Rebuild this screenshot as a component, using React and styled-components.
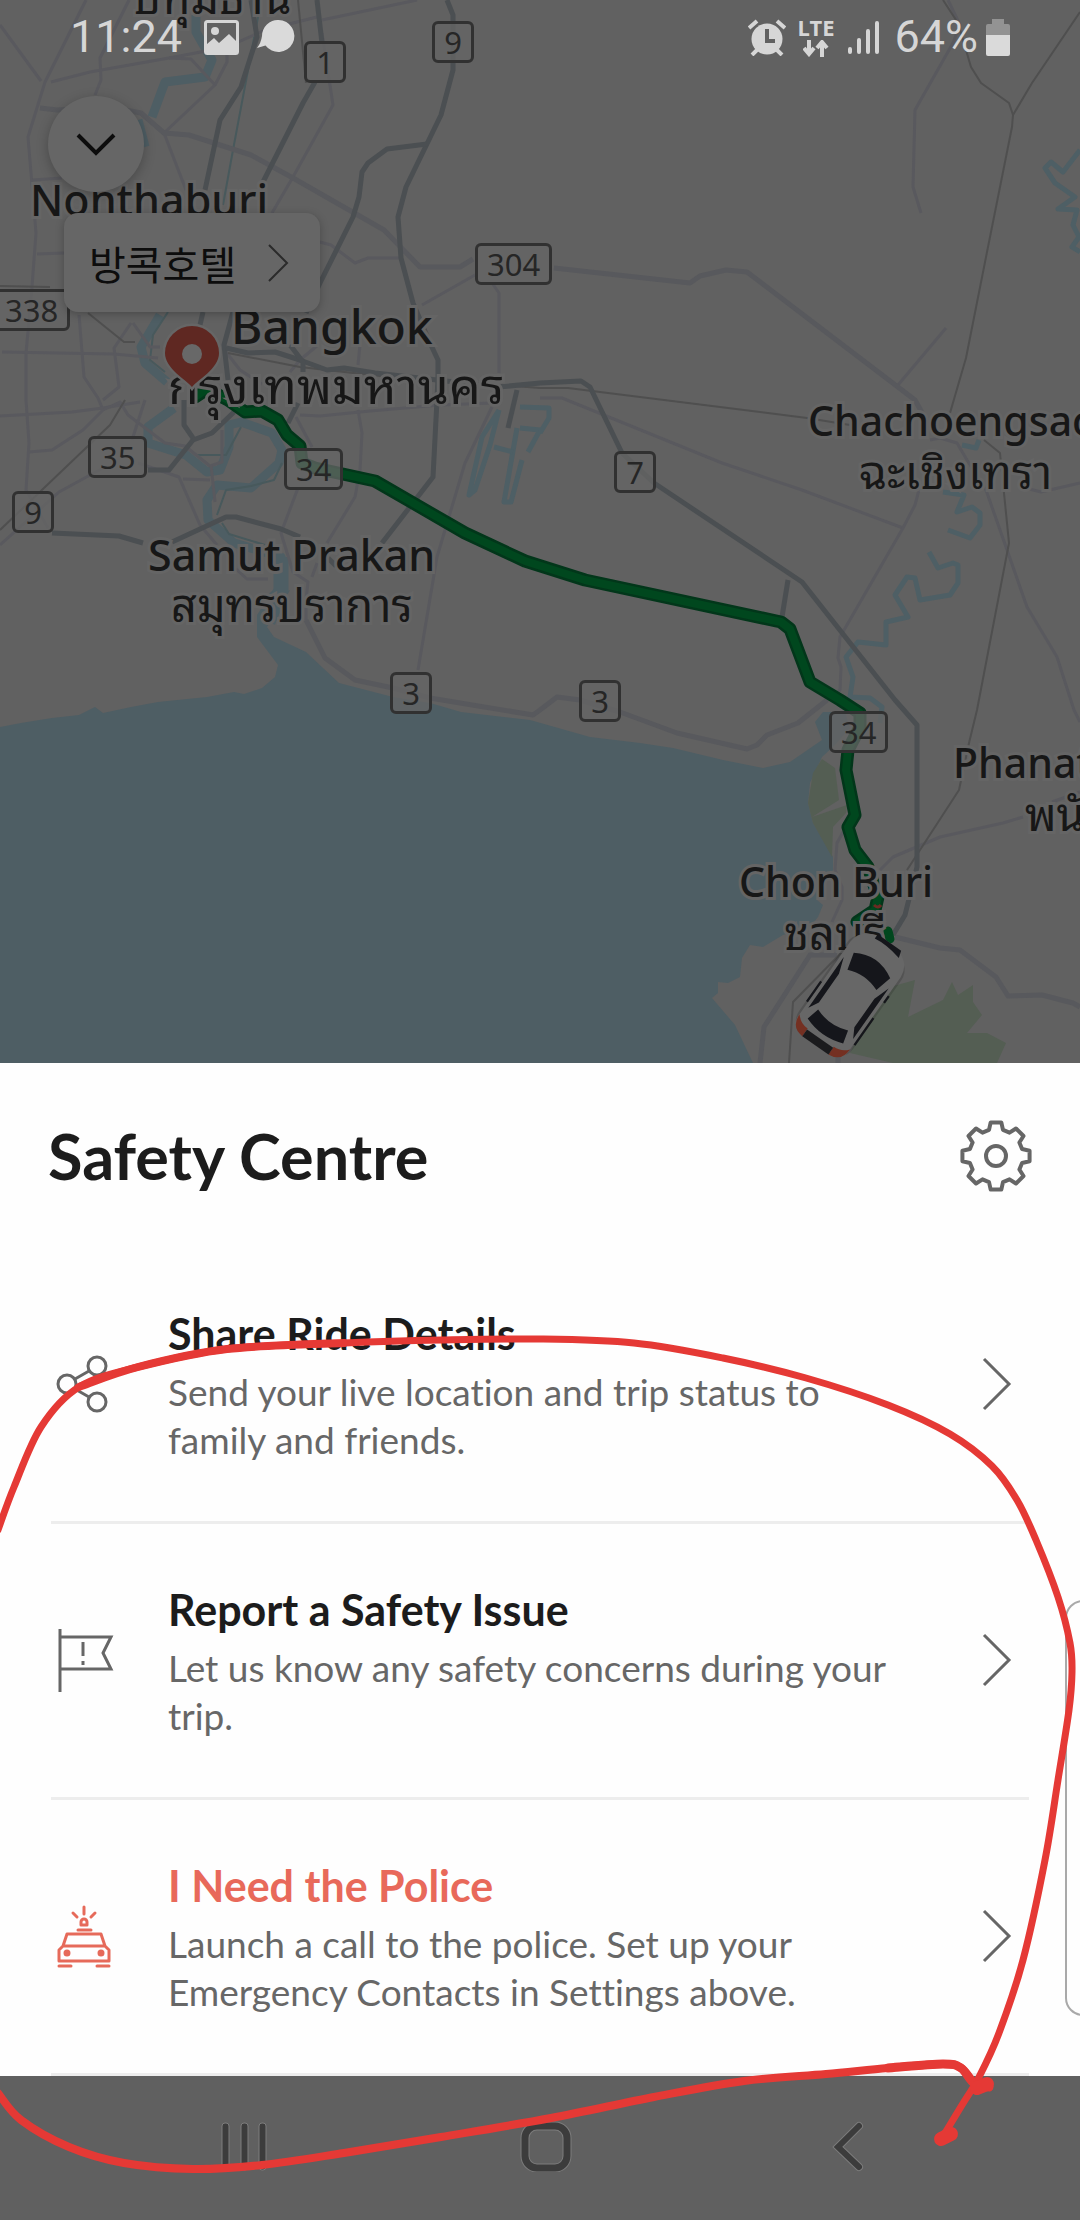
import React from "react";
import styled, { createGlobalStyle } from "styled-components";

const GlobalStyle = createGlobalStyle`
  * { box-sizing: border-box; }
  body { margin: 0; background: #606060; }
  button { border: 0; padding: 0; margin: 0; background: none; font: inherit; color: inherit; text-align: left; cursor: pointer; }
  svg { display: block; flex: none; }
`;

const Screen = styled.main`
  position: relative;
  display: flex;
  flex-direction: column;
  min-height: 100vh;
  overflow: hidden;
  font-family: Lato, "Noto Sans", sans-serif;
  font-variant-ligatures: none;
`;

/* ---------- map ---------- */

const MapArea = styled.section`
  position: relative;
  flex: 1 0 1063px;
  overflow: hidden;
  background: #616161;
`;

const MapCanvas = styled.svg`
  position: absolute;
  top: 0;
  left: 0;
`;

const LABEL_SIZES = { town: 41, city: 43, capital: 48, thai: 45, thaiCapital: 50 };

const MapLabel = styled.span`
  position: absolute;
  left: ${(p) => p.$x}px;
  top: ${(p) => p.$y}px;
  font-family: "Noto Sans", "Noto Sans Thai Looped", "Noto Sans Thai", sans-serif;
  font-size: ${(p) => LABEL_SIZES[p.$size]}px;
  font-weight: ${(p) => (p.$size.startsWith("thai") ? 400 : 500)};
  line-height: 56px;
  white-space: nowrap;
  color: #171717;
  -webkit-text-stroke: 6px #656565;
  paint-order: stroke fill;
`;

const Shield = styled.span`
  position: absolute;
  left: ${(p) => p.$x}px;
  top: ${(p) => p.$y}px;
  min-width: 42px;
  height: 42px;
  padding: 0 9px;
  border: 3px solid #313131;
  border-radius: 6px;
  background: rgba(102, 102, 102, 0.75);
  font-family: "Noto Sans", sans-serif;
  font-size: 31px;
  line-height: 36px;
  text-align: center;
  color: #262626;
`;

const MapOverlay = styled.svg`
  position: absolute;
  top: 0;
  left: 0;
`;

const MapControls = styled.div`
  position: relative;
  display: flex;
  flex-direction: column;
  align-items: flex-start;
  padding: 22px 48px 0;
`;

const CollapseButton = styled.button`
  display: grid;
  place-items: center;
  width: 96px;
  height: 96px;
  border-radius: 50%;
  background: #666;
  box-shadow: 0 3px 12px rgba(0, 0, 0, 0.25);
`;

const Destination = styled.button`
  display: flex;
  align-items: center;
  gap: 32px;
  height: 99px;
  margin: 21px 0 0 16px;
  padding: 0 30px 0 25px;
  border-radius: 14px;
  background: #666;
  box-shadow: 0 2px 9px rgba(0, 0, 0, 0.25);
  font-family: "Noto Sans CJK KR", sans-serif;
  font-size: 40px;
  line-height: 56px;
  color: #0d0d0d;
`;

/* ---------- status bar ---------- */

const StatusBar = styled.header`
  position: relative;
  display: flex;
  justify-content: space-between;
  align-items: center;
  height: 74px;
  padding: 0 70px;
  font-family: Roboto, sans-serif;
  font-size: 45px;
  line-height: 52px;
  color: #d6d6d6;
`;

const StatusGroup = styled.div`
  display: flex;
  align-items: center;
  gap: ${(p) => p.$gap}px;
`;

const Clock = styled.time`
  margin-right: 4px;
`;

const Network = styled.div`
  display: flex;
  flex-direction: column;
  align-items: center;
  gap: 3px;
  font-family: "Noto Sans", sans-serif;
  font-size: 22px;
  font-weight: 700;
  line-height: 20px;
`;

/* ---------- sheet ---------- */

const Sheet = styled.section`
  position: relative;
  background: #fefefe;
`;

const SheetHeader = styled.div`
  display: flex;
  align-items: center;
  justify-content: space-between;
  height: 185px;
  padding: 0 48px;
`;

const SheetTitle = styled.h1`
  margin: 0;
  font-size: 63px;
  font-weight: 700;
  line-height: 72px;
  color: #1c1c1c;
`;

const Options = styled.ul`
  margin: 0;
  padding: 0 51px;
  list-style: none;
`;

const Option = styled.li`
  border-bottom: 3px solid #ededed;
`;

const OptionButton = styled.button`
  display: flex;
  align-items: center;
  width: 100%;
  height: 273px;
  color: ${(p) => (p.$alert ? "#e66a5a" : "#666")};
`;

const OptionIcon = styled.span`
  flex: none;
  width: 117px;
`;

const OptionText = styled.span`
  flex: 1;
  display: flex;
  flex-direction: column;
  gap: 8px;
  padding-top: 2px;
`;

const OptionTitle = styled.span`
  font-size: 43px;
  font-weight: 700;
  line-height: 52px;
  color: ${(p) => (p.$alert ? "#e8695a" : "#1c1c1c")};
`;

const OptionBody = styled.span`
  max-width: 736px;
  font-size: 37px;
  line-height: 48px;
  color: #676767;
`;

const RowChevron = styled.svg`
  margin-right: 17px;
  color: #666;
`;

const EdgeHandle = styled.div`
  position: absolute;
  right: -30px;
  top: 537px;
  width: 45px;
  height: 416px;
  border: 2px solid #a9a9a9;
  border-radius: 18px;
  background: #fefefe;
`;

const NavBar = styled.nav`
  display: flex;
  align-items: flex-start;
  justify-content: space-between;
  height: 144px;
  padding: 44px 207px 0 219px;
  background: #606060;
`;

const Scribble = styled.svg`
  position: absolute;
  left: 0;
  bottom: 0;
  pointer-events: none;
`;

/* ---------- map data ---------- */

const LIGHT_ROADS = [
  "86,0 45,82 28,137 36,233 31,300 26,353 26,400 29,443 26,490 48,528",
  "0,25 41,81",
  "51,82 90,72 169,58 227,47 265,30 317,17",
  "322,20 417,0",
  "129,0 100,58 101,80 95,95",
  "164,133 186,190",
  "164,133 215,85 191,59 169,58",
  "215,85 227,62 227,45",
  "322,33 333,105 293,177 272,213",
  "33,180 62,178",
  "37,254 64,253",
  "320,242 331,245 355,263 368,258 401,258",
  "422,305 475,275",
  "492,283 499,293 499,373",
  "79,315 84,377 98,398 103,410",
  "2,352 114,354 158,358",
  "131,323 114,348 119,387 103,400",
  "133,323 150,347 160,347",
  "0,416 72,412 103,408 140,402",
  "29,452 52,450 83,430 103,410 120,402 128,415 165,443 185,446 210,466 222,462 222,430",
  "145,400 132,440",
  "138,463 179,477 200,525 217,545",
  "211,465 215,502",
  "183,479 210,480",
  "0,545 59,492 103,468",
  "296,417 312,447",
  "298,488 281,533 293,572 308,582 306,600 306,620",
  "358,410 362,433 360,470 355,497 327,543",
  "317,563 312,577",
  "492,407 465,463 437,557 418,670",
  "300,415 320,416 370,411 440,405 492,403",
  "236,569 247,579 268,579",
  "360,345 358,365",
  "318,345 300,360 290,372",
  "226,352 240,370 262,384",
  "540,398 562,398 722,463 802,490 903,528",
  "919,490 915,505 903,528 840,637 838,658 841,667 840,690 815,710",
  "948,0 960,25 953,43 915,110 913,187 921,213",
  "946,328 898,385",
  "930,440 940,438 957,443 967,460 986,490 1027,607 1057,657 1074,710 1080,722",
  "1022,487 1041,492 1080,483",
  "843,832 837,843 835,870 842,887 842,900 832,922",
  "880,870 893,857 940,837 1003,823 1023,817",
  "1052,802 1080,792",
];

const WIDE_LIGHT_ROADS = [
  "40,108 57,110 110,107 141,113 164,133 189,135 251,155 293,178 384,230 420,267 460,267 473,259",
  "554,268 690,283 700,276 726,270 747,272 915,400 925,418",
  "306,620 325,658 355,680 393,688 430,698 533,715 540,710 557,697 580,700 620,712 677,733 747,749 757,745 767,735 798,723 827,700",
  "895,937 940,948 960,950 996,977 1008,996 1042,995 1073,1003 1080,1007",
  "837,955 810,955 764,1027 760,1063",
  "838,957 838,1063",
];

const MOTORWAYS = [
  "251,0 257,37 241,87 220,120 205,190",
  "317,0 322,43",
  "315,82 303,103 263,182",
  "447,0 453,15 453,70 441,115 406,187 398,217 401,258 413,303 430,343 438,360 438,377 437,400 433,477 382,543",
  "427,144 387,149 368,163 362,172 359,197 353,217 320,283 306,313",
  "203,312 200,325",
  "233,312 224,345 228,380",
  "226,348 248,353 275,352 300,360 327,370 344,368 375,373 499,387 540,383 581,381 590,387 622,453 654,483 802,582 895,700 917,725 917,867 905,915 893,935",
  "290,345 303,362 303,372",
  "517,390 508,428",
  "788,580 782,617",
  "143,543 119,536 52,533",
  "172,542 226,517 236,517 281,529 300,537",
  "148,470 169,470 193,440 212,433 234,412",
  "184,400 184,425 193,438",
  "298,403 288,423",
  "328,558 336,566",
];

const RAILWAYS = [
  "298,0 306,83",
  "943,0 958,23 971,67 981,83 1009,103 1013,115 1012,127 988,247 966,358 950,413",
  "1013,115 1032,83 1080,12",
  "984,440 1000,453 1009,543 977,710 969,743 959,790 920,850 907,870",
  "847,947 793,1002 789,1063",
  "540,388 568,388 807,418 850,425",
  "228,353 300,367 380,376 540,388",
  "88,313 124,342 135,342",
  "0,286 50,287",
  "125,400 110,425 0,530",
];

const RIVERS = [
  "196,15 196,32 212,60 205,77 165,82 152,117",
  "138,120 145,147",
  "160,315 141,347 145,363 167,382",
  "174,408 148,427 148,443 186,455 207,472 220,470 229,447 229,425 241,422 272,433 282,450 279,463 251,488 217,485 207,500 208,520 234,543 281,557 283,587 272,597",
];

const STREAMS = [
  "499,410 482,437 469,495 475,490 490,445 499,410",
  "517,428 504,502 511,502 522,460",
  "494,447 513,452",
  "520,428 540,430 528,452",
  "520,407 549,408 549,418 540,433",
  "943,492 964,495 957,512 972,507 980,513 980,525 970,538 948,530",
  "929,552 938,568 953,563 958,565 958,583 950,595 920,600 915,578 907,577 895,595 908,617 886,622 886,645 858,642 846,657 853,677 850,697 870,698 882,707 880,723",
  "962,445 976,448 979,440",
  "1080,150 1063,172 1051,162 1045,168 1055,183 1075,197 1058,209 1077,210 1073,225 1079,237 1072,247 1080,252",
];

const CANALS = [
  "258,17 233,150 223,205",
  "168,312 153,335 150,360 165,372",
  "241,427 226,455 196,455",
  "282,463 274,480 251,486 226,490 217,515",
  "222,523 229,534 265,545",
];

const SEA =
  "0,727 21,723 52,718 79,715 95,707 103,713 131,707 158,702 207,697 234,692 244,694 262,688 275,677 278,665 257,637 257,615 267,600 290,590 282,605 267,627 274,637 306,652 339,683 393,697 430,703 461,712 530,720 590,737 640,743 673,748 723,760 763,768 790,762 822,740 815,722 823,712 845,712 850,728 835,745 822,757 810,783 808,803 813,823 833,857 833,870 817,900 823,905 818,917 810,927 783,935 763,947 750,945 742,958 740,977 728,983 718,982 718,993 712,998 735,1025 753,1063 0,1063";

const PARKS = [
  "822,759 835,768 839,800 812,817 847,805 846,813 833,827 832,857 813,823 808,803 813,773",
  "867,1020 890,987 915,980 908,1017 943,1000 952,982 958,995 973,985 973,1002 982,1015 967,1033 987,1033 1006,1043 997,1063 893,1063 850,1053",
];

const ROUTE =
  "195,397 207,389 228,400 245,412 262,411 278,420 287,435 300,446 302,463 315,468 375,481 465,533 525,561 585,580 781,622 790,629 810,682 840,700 860,713 860,727 848,750 846,770 855,815 848,827 855,850 868,867 878,897 875,910 857,922";

const PLACES = [
  { text: "ปทุมธานี", x: 132, y: -31, size: "thai" },
  { text: "Nonthaburi", x: 30, y: 172, size: "city" },
  { text: "Bangkok", x: 231, y: 298, size: "capital" },
  { text: "กรุงเทพมหานคร", x: 168, y: 357, size: "thaiCapital" },
  { text: "Samut Prakan", x: 148, y: 527, size: "city" },
  { text: "สมุทรปราการ", x: 171, y: 577, size: "thai" },
  { text: "Chachoengsao", x: 808, y: 392, size: "town" },
  { text: "ฉะเชิงเทรา", x: 859, y: 444, size: "thai" },
  { text: "Phanat Nikhom", x: 953, y: 734, size: "town" },
  { text: "พนัสนิคม", x: 1025, y: 786, size: "thai" },
  { text: "Chon Buri", x: 739, y: 853, size: "town" },
  { text: "ชลบุรี", x: 784, y: 905, size: "thai" },
];

const SHIELDS = [
  ["1", 304, 41],
  ["9", 432, 21],
  ["304", 475, 243],
  ["338", -7, 289],
  ["35", 88, 436],
  ["9", 12, 491],
  ["34", 284, 448],
  ["7", 614, 451],
  ["3", 390, 672],
  ["3", 579, 680],
  ["34", 829, 711],
];

function Lines({ items, color, width }) {
  return (
    <g fill="none" stroke={color} strokeWidth={width} strokeLinejoin="round">
      {items.map((points) => (
        <polyline key={points} points={points} />
      ))}
    </g>
  );
}

function MapDrawing() {
  return (
    <MapCanvas width="1080" height="1063" viewBox="0 0 1080 1063" aria-hidden="true">
      <polygon points={SEA} fill="#4e5e64" />
      {PARKS.map((p) => (
        <polygon key={p} points={p} fill="#545e53" />
      ))}
      <Lines items={RIVERS} color="#4e5e64" width="9" />
      <Lines items={["281,557 281,590 268,622"]} color="#4e5e64" width="15" />
      <Lines items={STREAMS} color="#4e5f65" width="5" />
      <Lines items={CANALS} color="#48595c" width="2" />
      <Lines items={LIGHT_ROADS} color="#59595e" width="3" />
      <Lines items={WIDE_LIGHT_ROADS} color="#58595d" width="5" />
      <Lines items={RAILWAYS} color="#4f4f4f" width="2" />
      <Lines items={MOTORWAYS} color="#4b4f52" width="5" />
      <g fill="none" strokeLinejoin="round" strokeLinecap="round">
        <polyline points={ROUTE} stroke="#02361a" strokeWidth="13" />
        <polyline points={ROUTE} stroke="#00471e" strokeWidth="8" />
        <path d="M888 931l2 8" stroke="#00471e" strokeWidth="9" />
      </g>
      <path d="M874 905q4 4 7 0" fill="none" stroke="#6b2a22" strokeWidth="3" />
    </MapCanvas>
  );
}

function MapMarkers() {
  return (
    <MapOverlay width="1080" height="1063" viewBox="0 0 1080 1063" aria-hidden="true">
      <path
        d="M192 387c-5-7-27-18-27-34a27 27 0 0 1 54 0c0 16-22 27-27 34z"
        fill="#5f2822"
        stroke="#666"
        strokeWidth="5"
        paintOrder="stroke"
      />
      <circle cx="192" cy="354" r="10" fill="#686868" />
      <g transform="translate(852 993) rotate(35) scale(1.14 1.03)">
        <rect x="-29" y="-56" width="58" height="118" rx="18" fill="#000" opacity="0.14" />
        <path
          d="M-27 -40Q-26 -60 0 -61Q26 -60 27 -40V50Q26 60 16 60H-16Q-26 60 -27 50Z"
          fill="#676767"
        />
        <path d="M-11 -61H14L16 -54Q0 -58 -11 -56Z" fill="#15161b" />
        <path d="M-19 -33Q0 -46 20 -33L16 -16Q0 -23 -15 -16Z" fill="#15161b" />
        <path d="M-16 32Q0 39 16 32L19 45Q0 53 -19 45Z" fill="#15161b" />
        <path d="M-24 -24L-19 -8V26L-24 36ZM24 -24L19 -8V26L24 36Z" fill="#15161b" />
        <path d="M-28 8V32M28 8V40M28 -18V-10" stroke="#15161b" strokeWidth="2" />
        <path d="M-27 46Q-27 61 -14 62V53Q-22 53 -27 46ZM27 46Q27 61 14 62V53Q22 53 27 46Z" fill="#743022" />
        <path d="M-14 54H14V62H-14Z" fill="#1b1b1d" />
      </g>
    </MapOverlay>
  );
}

/* ---------- icons ---------- */

const toothPoints = Array.from({ length: 8 }, (_, i) =>
  [
    [27, -15],
    [34, -9],
    [34, 9],
    [27, 15],
  ].map(([r, a]) => {
    const t = ((i * 45 + a) * Math.PI) / 180;
    return `${(36 + r * Math.sin(t)).toFixed(2)},${(36 - r * Math.cos(t)).toFixed(2)}`;
  })
)
  .flat()
  .join(" ");

const GearIcon = () => (
  <svg width="72" height="72" viewBox="0 0 72 72" fill="none" stroke="#666" strokeWidth="4" strokeLinejoin="round">
    <polygon points={toothPoints} />
    <circle cx="36" cy="36" r="10" />
  </svg>
);

const lineIcon = {
  width: 72,
  height: 72,
  viewBox: "3 0 72 72",
  fill: "none",
  stroke: "currentColor",
  strokeWidth: 3,
};

const ShareIcon = () => (
  <svg {...lineIcon}>
    <circle cx="19" cy="35" r="9" />
    <circle cx="49" cy="17" r="9" />
    <circle cx="49" cy="53" r="9" />
    <path d="M27 30l14-8M27 40l14 8" />
  </svg>
);

const FlagIcon = () => (
  <svg {...lineIcon}>
    <path d="M12 4v63M12 12h51l-8 16 8 16H12M35 17v14M35 36v4" />
  </svg>
);

const PoliceIcon = () => (
  <svg {...lineIcon} strokeLinecap="round" strokeLinejoin="round">
    <path d="M36 6v7M25 12l4 4M47 12l-4 4M30 29h13M19 33h34l4 12 4 4v11H11V49l4-4zM15 45h42M11 65h12M49 65h12" />
    <path d="M33 24v-3a3 3 0 0 1 6 0v3z" />
    <circle cx="19" cy="52" r="2" fill="currentColor" />
    <circle cx="53" cy="52" r="2" fill="currentColor" />
  </svg>
);

const ChevronRight = () => (
  <RowChevron width="30" height="56" viewBox="0 0 30 56" fill="none" stroke="currentColor" strokeWidth="3">
    <path d="M2 2l25 25L2 52" />
  </RowChevron>
);

const OPTIONS = [
  {
    icon: ShareIcon,
    title: "Share Ride Details",
    body: "Send your live location and trip status to family and friends.",
  },
  {
    icon: FlagIcon,
    title: "Report a Safety Issue",
    body: "Let us know any safety concerns during your trip.",
  },
  {
    icon: PoliceIcon,
    title: "I Need the Police",
    body: "Launch a call to the police. Set up your Emergency Contacts in Settings above.",
    alert: true,
  },
];

/* ---------- freehand strokes ---------- */

function smooth(points) {
  let d = `M${points[0]}`;
  for (let i = 0; i < points.length - 1; i++) {
    const a = points[i - 1] || points[i];
    const b = points[i];
    const c = points[i + 1];
    const e = points[i + 2] || c;
    d += `C${b[0] + (c[0] - a[0]) / 6},${b[1] + (c[1] - a[1]) / 6} ${c[0] - (e[0] - b[0]) / 6},${
      c[1] - (e[1] - b[1]) / 6
    } ${c}`;
  }
  return d;
}

const UPPER_STROKE = [
  [-2, 1530], [14, 1487], [41, 1427], [79, 1387], [138, 1367], [227, 1349], [344, 1343], [441, 1340],
  [537, 1339], [634, 1343], [723, 1358], [806, 1378], [888, 1405], [950, 1434], [992, 1466], [1017, 1500],
  [1036, 1540], [1058, 1597], [1070, 1643], [1072, 1672], [1069, 1710], [1058, 1780], [1045, 1860],
  [1023, 1960], [999, 2033], [979, 2077], [962, 2105], [942, 2138],
];

const LOWER_STROKE = [
  [-2, 2093], [21, 2120], [69, 2147], [124, 2163], [193, 2169], [262, 2165], [344, 2153], [441, 2137],
  [551, 2118], [654, 2097], [744, 2081], [826, 2074], [888, 2068], [943, 2064], [961, 2068], [974, 2083],
  [989, 2087],
];

export default function App() {
  return (
    <Screen>
      <GlobalStyle />
      <MapArea aria-label="Trip map">
        <MapDrawing />
        {PLACES.map((p) => (
          <MapLabel key={p.text} $x={p.x} $y={p.y} $size={p.size}>
            {p.text}
          </MapLabel>
        ))}
        {SHIELDS.map(([n, x, y]) => (
          <Shield key={`${n}-${x}`} $x={x} $y={y}>
            {n}
          </Shield>
        ))}
        <MapMarkers />
        <StatusBar>
          <StatusGroup $gap={18}>
            <Clock>11:24</Clock>
            <svg width="35" height="35" viewBox="0 0 35 35">
              <rect x="1.5" y="1.5" width="32" height="32" rx="2" fill="none" stroke="#d6d6d6" strokeWidth="3" />
              <circle cx="11" cy="11" r="4" fill="#d6d6d6" />
              <path d="M3 24l7-6 5 5 10-9 8 8v11H3z" fill="#d6d6d6" />
            </svg>
            <svg width="38" height="34" viewBox="0 0 38 34">
              <path d="M21.500 0a16 16 0 1 1-13 25.500L0 28q4-5 5-12a16 16 0 0 1 16.500-16z" fill="#dadada" />
            </svg>
          </StatusGroup>
          <StatusGroup $gap={12}>
            <svg width="38" height="37" viewBox="0 0 38 37">
              <g stroke="#d6d6d6" strokeWidth="4">
                <path d="M1 9l8-7M37 9l-8-7M4 36l6-6M34 36l-6-6" />
              </g>
              <circle cx="19" cy="20" r="15.500" fill="#d6d6d6" />
              <path d="M19 10v12h8" fill="none" stroke="#616161" strokeWidth="4" />
            </svg>
            <Network>
              LTE
              <svg width="26" height="17" viewBox="0 0 26 17" fill="none" stroke="#d6d6d6" strokeWidth="4">
                <path d="M6 0v13M1 8l5 6 5-6M19 17V4M14 8l5-6 5 6" />
              </svg>
            </Network>
            <svg width="36" height="36" viewBox="0 0 36 36" stroke="#d6d6d6" strokeWidth="4" strokeLinecap="round">
              <path d="M4 30v3M13 21v12M22 12v21M31 4v29" />
            </svg>
            <StatusGroup $gap={8}>
              <span>64%</span>
              <svg width="24" height="37" viewBox="0 0 24 37">
                <path d="M6 0h12v5h4q2 0 2 2v10H0V7q0-2 2-2h4z" fill="#939393" />
                <path d="M0 16h24v19q0 2-2 2H2q-2 0-2-2z" fill="#dadada" />
              </svg>
            </StatusGroup>
          </StatusGroup>
        </StatusBar>
        <MapControls>
          <CollapseButton aria-label="Collapse">
            <svg width="40" height="24" viewBox="0 0 40 24" fill="none" stroke="#0d0d0d" strokeWidth="4">
              <path d="M2 3l18 18L38 3" />
            </svg>
          </CollapseButton>
          <Destination>
            방콕호텔
            <svg width="22" height="38" viewBox="0 0 22 38" fill="none" stroke="#2b2b2b" strokeWidth="2">
              <path d="M1 1l18 18L1 37" />
            </svg>
          </Destination>
        </MapControls>
      </MapArea>

      <Sheet>
        <SheetHeader>
          <SheetTitle>Safety Centre</SheetTitle>
          <button aria-label="Settings">
            <GearIcon />
          </button>
        </SheetHeader>
        <Options>
          {OPTIONS.map(({ icon: Icon, title, body, alert }) => (
            <Option key={title}>
              <OptionButton $alert={alert}>
                <OptionIcon>
                  <Icon />
                </OptionIcon>
                <OptionText>
                  <OptionTitle $alert={alert}>{title}</OptionTitle>
                  <OptionBody>{body}</OptionBody>
                </OptionText>
                <ChevronRight />
              </OptionButton>
            </Option>
          ))}
        </Options>
        <EdgeHandle />
      </Sheet>

      <NavBar aria-label="System navigation">
        <button aria-label="Recent apps">
          <svg width="50" height="52" viewBox="0 0 50 52" fill="#3c3c3c" stroke="#7c7c7c" strokeWidth="1">
            <rect x="3" y="3" width="7" height="47" rx="3" />
            <rect x="22" y="3" width="7" height="47" rx="3" />
            <rect x="40" y="3" width="7" height="47" rx="3" />
          </svg>
        </button>
        <button aria-label="Home">
          <svg width="52" height="52" viewBox="0 0 52 52" fill="none">
            <rect x="5" y="6" width="42" height="42" rx="12" stroke="#7c7c7c" strokeWidth="9" />
            <rect x="5" y="6" width="42" height="42" rx="12" stroke="#3c3c3c" strokeWidth="7" />
          </svg>
        </button>
        <button aria-label="Back">
          <svg width="50" height="52" viewBox="0 0 50 52" fill="none" strokeLinecap="round">
            <path d="M36 6L15 27l21 20" stroke="#7c7c7c" strokeWidth="8" />
            <path d="M36 6L15 27l21 20" stroke="#3c3c3c" strokeWidth="6" />
          </svg>
        </button>
      </NavBar>

      <Scribble width="1080" height="1000" viewBox="0 1220 1080 1000" aria-hidden="true">
        <g fill="none" stroke="#e53935" strokeLinecap="round" strokeLinejoin="round">
          <path d={smooth(UPPER_STROKE)} strokeWidth="7" />
          <path d={smooth(UPPER_STROKE.slice(3, 7))} strokeWidth="8" />
          <path d={smooth(LOWER_STROKE)} strokeWidth="8" />
          <path d={smooth(LOWER_STROKE.slice(-5))} strokeWidth="9" />
          <path d="M941 2139l10-5M977 2088l10-4" strokeWidth="14" />
        </g>
      </Scribble>
    </Screen>
  );
}
